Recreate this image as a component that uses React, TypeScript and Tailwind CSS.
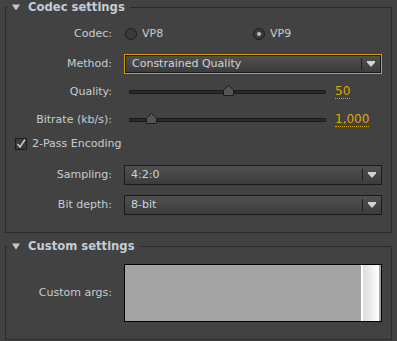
import { ReactNode } from 'react'

const font = "font-['Lucida_Grande','DejaVu_Sans',sans-serif]"

const Panel = ({ title, children }: { title: string; children: ReactNode }) => (
  <fieldset className="mx-[5px] border border-[#2b2b2b] pb-[17px] pr-[8px]">
    <legend className="ml-[1px] flex items-center gap-[8px] px-[5px] leading-[14px]">
      <svg width="8" height="7" viewBox="0 0 8 7" className="fill-[#c4c8cc]">
        <path d="M0 0.5h8L4 6.5z" />
      </svg>
      <span className="text-[11.6px] font-bold text-[#c3cdd8]">{title}</span>
    </legend>
    {children}
  </fieldset>
)

const Row = ({ label, className = '', children }: { label: string; className?: string; children: ReactNode }) => (
  <div className={`flex h-[20px] items-center ${className}`}>
    <div className="w-[107px] shrink-0 pr-[1px] text-right">{label}</div>
    <div className="ml-[11px] flex flex-1 items-center">{children}</div>
  </div>
)

const Radio = ({ label, checked }: { label: string; checked?: boolean }) => (
  <div className="flex items-center gap-[5px]">
    <span className="flex h-[12px] w-[12px] items-center justify-center rounded-full border border-[#1c1c1c] bg-[#3a3a3a]">
      {checked && <span className="h-[4px] w-[4px] rounded-full bg-[#bdbdbd]" />}
    </span>
    <span>{label}</span>
  </div>
)

const Select = ({ value, focused }: { value: string; focused?: boolean }) => (
  <div
    className={`flex h-[20px] w-[258px] items-center ${
      focused ? 'border border-[#d49a00] p-0' : ''
    }`}
  >
    <div className="flex h-full flex-1 items-center border border-[#1a1a1a] bg-gradient-to-b from-[#505050] to-[#3c3c3c]">
      <span className="flex-1 pl-[6px] text-[#cfd4da]">{value}</span>
      <span className="h-[12px] w-[1px] bg-[#1e1e1e]" />
      <span className="flex w-[18px] justify-center">
        <svg width="8" height="6" viewBox="0 0 8 6" className="fill-[#d2d2d2]">
          <path d="M0 0h8v1.5L4 6 0 1.5z" />
        </svg>
      </span>
    </div>
  </div>
)

const Slider = ({ pos, value }: { pos: number; value: string }) => (
  <div className="flex flex-1 items-center">
    <div className="relative ml-[5px] h-[4px] w-[197px] rounded-[1px] border border-[#1a1a1a] bg-[#2a2a2a]">
      <svg
        width="11"
        height="11"
        viewBox="0 0 11 11"
        className="absolute top-[-6px]"
        style={{ left: `${pos * 197 - 5.5}px` }}
      >
        <path d="M5.5 0.5L10.5 5V10.5H0.5V5Z" fill="#545454" stroke="#1c1c1c" />
      </svg>
    </div>
    <span className="ml-[9px] border-b border-dotted border-[#d9a100] text-[12px] leading-[13px] text-[#dfa800]">{value}</span>
  </div>
)

export default function App() {
  return (
    <div className={`h-[341px] w-[397px] overflow-hidden bg-[#424242] text-[11px] text-[#c9cdd2] ${font}`}>
      <Panel title="Codec settings">
        <Row label="Codec:" className="mt-[10px]">
          <div className="flex w-[258px]">
            <div className="w-[129px] pl-[1px]">
              <Radio label="VP8" />
            </div>
            <Radio label="VP9" checked />
          </div>
        </Row>
        <Row label="Method:" className="mt-[10px]">
          <Select value="Constrained Quality" focused />
        </Row>
        <Row label="Quality:" className="mt-[8px]">
          <Slider pos={0.5} value="50" />
        </Row>
        <Row label="Bitrate (kb/s):" className="mt-[8px]">
          <Slider pos={0.107} value="1,000" />
        </Row>
        <div className="mt-[4px] flex h-[20px] items-center gap-[5px] pl-[9px]">
          <span className="flex h-[12px] w-[12px] items-center justify-center border border-[#1c1c1c] bg-[#3a3a3a]">
            <svg width="10" height="10" viewBox="0 0 10 10" className="fill-none stroke-[#cfcfcf]">
              <path d="M1.5 5l2.5 3L9 0.5" strokeWidth="1.4" />
            </svg>
          </span>
          <span>2-Pass Encoding</span>
        </div>
        <Row label="Sampling:" className="mt-[11px]">
          <Select value="4:2:0" />
        </Row>
        <Row label="Bit depth:" className="mt-[10px]">
          <Select value="8-bit" />
        </Row>
      </Panel>
      <div className="h-[6px]" />
      <Panel title="Custom settings">
        <div className="mt-[11px] flex items-center">
          <div className="w-[107px] shrink-0 pr-[1px] text-right">Custom args:</div>
          <div className="ml-[11px] flex h-[58px] w-[258px] border border-black bg-[#a3a3a3]">
            <div className="flex-1" />
            <div className="w-[2px] bg-white" />
            <div className="w-[16px] bg-gradient-to-r from-[#dcdcdc] to-white" />
            <div className="w-[2px]" />
          </div>
        </div>
      </Panel>
    </div>
  )
}
